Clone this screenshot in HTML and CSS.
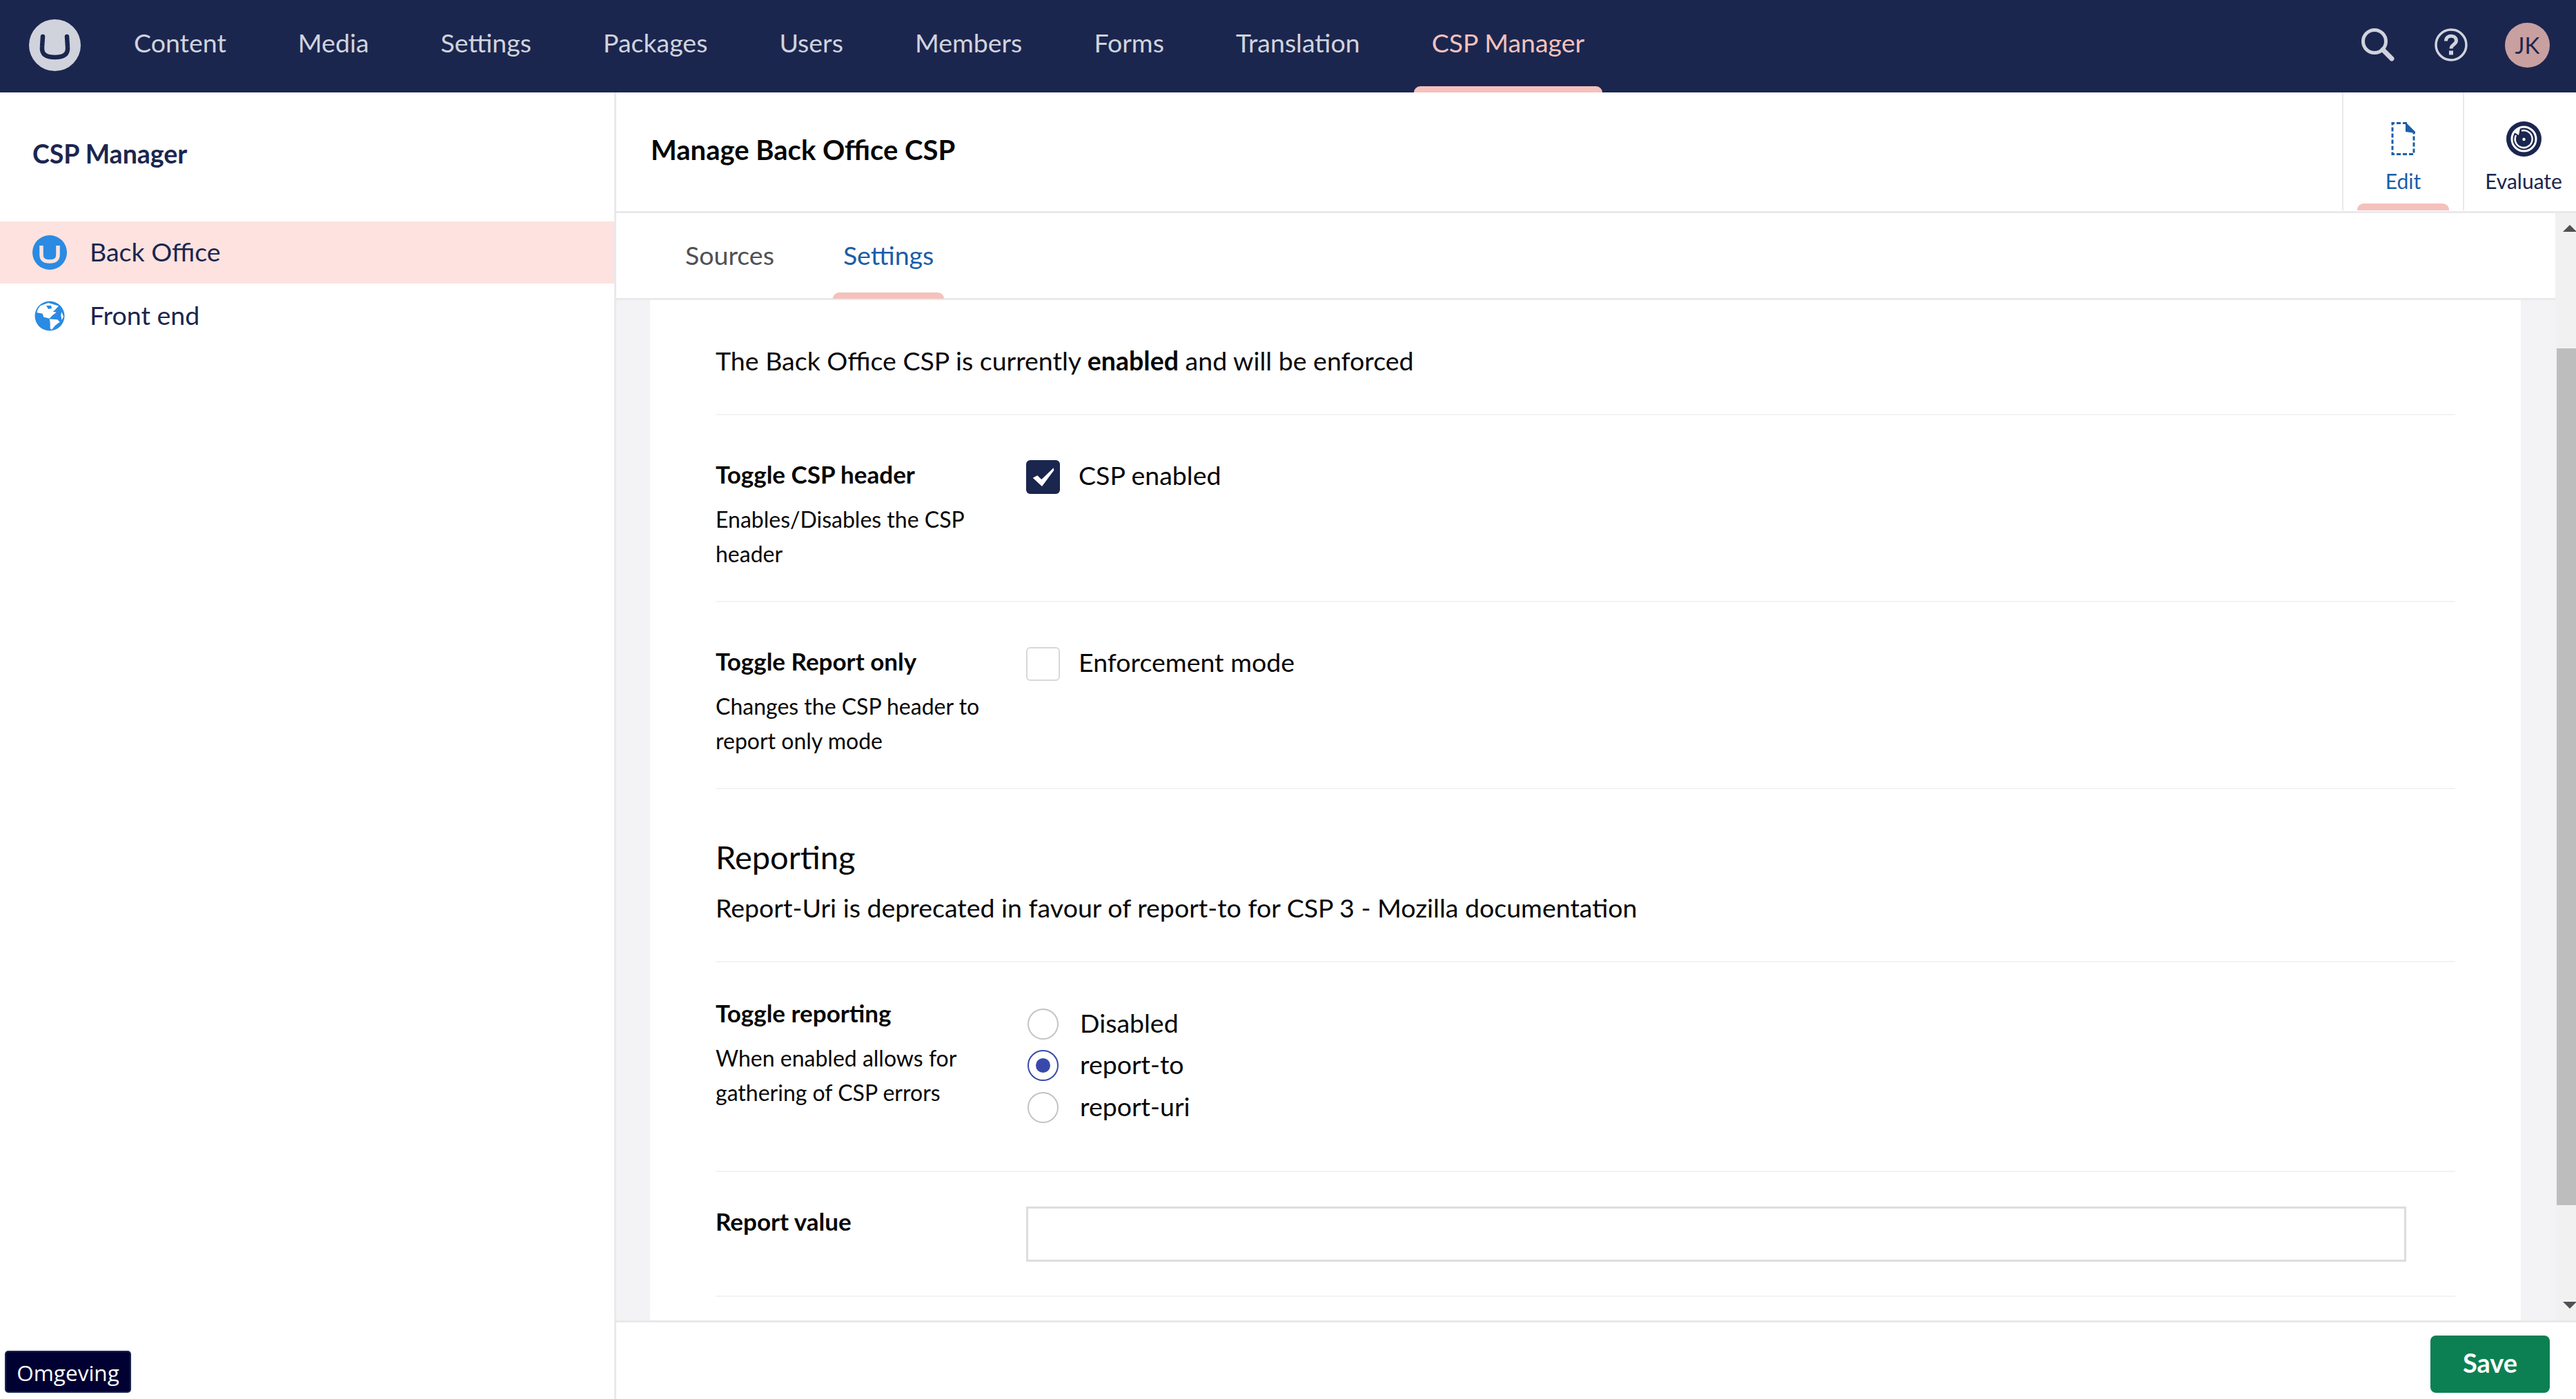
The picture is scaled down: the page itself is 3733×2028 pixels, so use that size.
FILE: index.html
```html
<!DOCTYPE html>
<html lang="en">
<head>
  <meta charset="UTF-8">
  <title>CSP Manager</title>
  <link rel="stylesheet" href="styles.css">
</head>
<body>
  <header class="topbar">
    <svg class="logo" viewBox="0 0 75 75"><circle cx="37.5" cy="37.5" r="37.5" fill="#d0d3dc"/><path d="M20 25 L19 40 C18 51 25 55 37.5 55 C50 55 57 51 56 40 L55 25" fill="none" stroke="#1b264f" stroke-width="6.5" stroke-linecap="round"/></svg>
    <nav class="sections">
      <a class="section">Content</a>
      <a class="section">Media</a>
      <a class="section">Settings</a>
      <a class="section">Packages</a>
      <a class="section">Users</a>
      <a class="section">Members</a>
      <a class="section">Forms</a>
      <a class="section">Translation</a>
      <a class="section active">CSP Manager</a>
    </nav>
    <div class="tools">
      <svg class="tool" viewBox="0 0 48 48"><circle cx="19" cy="19" r="16.5" fill="none" stroke="#d0d3dc" stroke-width="5"/><path d="M31 31 L44 44" stroke="#d0d3dc" stroke-width="7" stroke-linecap="round"/></svg>
      <svg class="tool help" viewBox="0 0 48 48"><circle cx="24" cy="24" r="22" fill="none" stroke="#d0d3dc" stroke-width="3.5"/><path d="M16.5 18.5 C16.5 8.5 31.5 9 31.5 18 C31.5 23.5 24 23.5 24 29.5" fill="none" stroke="#d0d3dc" stroke-width="5"/><rect x="21" y="32.5" width="6" height="6" fill="#d0d3dc"/></svg>
      <div class="avatar">JK</div>
    </div>
  </header>

  <div class="app">
    <aside class="sidebar">
      <h3 class="sidebar-title">CSP Manager</h3>
      <ul class="tree">
        <li class="tree-item active">
          <span class="tree-icon">
            <svg viewBox="0 0 50 50"><circle cx="25" cy="25" r="25" fill="#2b8ae2"/><path d="M13 15 L13 28 C13 36 18 38 25 38 C32 38 37 36 37 28 L37 15" fill="none" stroke="#fde2df" stroke-width="5.5"/></svg>
          </span>
          Back Office
        </li>
        <li class="tree-item">
          <span class="tree-icon">
            <svg viewBox="0 0 50 50"><circle cx="25" cy="25" r="21.5" fill="#2b8ae2"/><path d="M11.3 10.3 L23 6 L38 10.5 L33 16 L29.7 18.7 L34.7 19.7 L28 25 L24.7 28.7 L23 28.3 L16.3 26.7 L14.7 21.7 L6.3 20 L8 15 Z" fill="#fff"/><path d="M20 10 L27 10 L28 14 L23 15 Z" fill="#2b8ae2"/><path d="M24.7 29.5 L36.3 30.3 L39.7 33.7 L33 38.7 L28 45 L25.7 43.3 L25.7 35 Z" fill="#fff"/><path d="M42.3 19 L45 26 L42.5 31 L41.3 24 Z" fill="#fff"/></svg>
          </span>
          Front end
        </li>
      </ul>
    </aside>

    <main class="editor">
      <div class="editor-head">
        <h1 class="editor-title">Manage Back Office CSP</h1>
        <div class="apps">
          <div class="app-btn active">
            <svg class="app-icon doc" viewBox="0 0 35 48"><path d="M23 1.5 L2 1.5 L2 46.5 L33 46.5 L33 14" fill="none" stroke="#1b5ea8" stroke-width="3" stroke-dasharray="6 3"/><path d="M21 0 L35 14 L35 16 L21 14 Z" fill="#1b5ea8"/></svg>
            <span>Edit</span>
          </div>
          <div class="app-btn">
            <svg class="app-icon" viewBox="0 0 51 51"><circle cx="25.5" cy="25.5" r="25.5" fill="#1b264f"/><circle cx="25.5" cy="25.5" r="17.5" fill="none" stroke="#fff" stroke-width="3"/><path d="M14 20 A12.5 12.5 0 1 0 22 13.5" fill="none" stroke="#fff" stroke-width="2.5"/><path d="M10 15 L20 10 L18 20 Z" fill="#fff"/><circle cx="25.5" cy="26" r="2.2" fill="#fff"/></svg>
            <span>Evaluate</span>
          </div>
        </div>
      </div>

      <div class="editor-body">
        <div class="editor-main">
          <div class="tabs">
            <a class="tab">Sources</a>
            <a class="tab active">Settings</a>
          </div>
          <div class="canvas">
            <section class="panel">
              <p class="status">The Back Office CSP is currently <b>enabled</b> and will be enforced</p>

              <div class="prop">
                <div class="prop-label">
                  <label>Toggle CSP header</label>
                  <small>Enables/Disables the CSP header</small>
                </div>
                <div class="check-row">
                  <span class="check on">
                    <svg viewBox="0 0 49 49"><path d="M9.7 25.7 L16.3 22.3 L22.3 28 L39.7 11.3 L40.3 14.7 L23 38 Z" fill="#fff"/></svg>
                  </span>
                  CSP enabled
                </div>
              </div>

              <div class="prop">
                <div class="prop-label">
                  <label>Toggle Report only</label>
                  <small>Changes the CSP header to report only mode</small>
                </div>
                <div class="check-row">
                  <span class="check"></span>
                  Enforcement mode
                </div>
              </div>

              <div class="intro">
                <h2>Reporting</h2>
                <p>Report-Uri is deprecated in favour of report-to for CSP 3 - Mozilla documentation</p>
              </div>

              <div class="prop reporting">
                <div class="prop-label">
                  <label>Toggle reporting</label>
                  <small>When enabled allows for gathering of CSP errors</small>
                </div>
                <div class="radios">
                  <div class="radio-row"><span class="radio"></span>Disabled</div>
                  <div class="radio-row"><span class="radio on"></span>report-to</div>
                  <div class="radio-row"><span class="radio"></span>report-uri</div>
                </div>
              </div>

              <div class="prop value">
                <div class="prop-label">
                  <label>Report value</label>
                </div>
                <input class="text-input" type="text">
              </div>
            </section>
          </div>
        </div>
        <div class="scrollbar">
          <span class="arrow up"></span>
          <span class="thumb"></span>
          <span class="arrow down"></span>
        </div>
      </div>

      <footer class="editor-foot">
        <button class="save">Save</button>
      </footer>
    </main>
  </div>

  <div class="env-badge">Omgeving</div>
</body>
</html>
```

FILE: styles.css
```css
* {
  box-sizing: border-box;
}

html, body {
  height: 100%;
}

body {
  margin: 0;
  display: flex;
  flex-direction: column;
  overflow: hidden;
  font-family: Lato, "Open Sans", sans-serif;
  font-size: 36px;
  color: #060606;
  background-color: #fff;
}

/* top bar */
.topbar {
  height: 134px;
  flex: none;
  display: flex;
  align-items: center;
  padding: 0 38px 4px 42px;
  background-color: #1b264f;
}

.logo {
  width: 75px;
  height: 75px;
  flex: none;
}

.sections {
  display: flex;
  height: 134px;
  margin: 4px 0 0 25px;
  flex: 1;
}

.section {
  position: relative;
  display: flex;
  align-items: center;
  padding: 0 52px 11px;
  color: #d0d3dc;
  font-size: 37.5px;
}

.section.active {
  color: #f5c1bc;
}

.section.active::after {
  content: "";
  position: absolute;
  left: 26px;
  right: 26px;
  bottom: 0;
  height: 9px;
  border-radius: 9px 9px 0 0;
  background-color: #f5c1bc;
}

.tools {
  display: flex;
  align-items: center;
}

.tool {
  width: 48px;
  height: 48px;
}

.tool.help {
  margin-left: 58px;
}

.avatar {
  width: 65px;
  height: 65px;
  margin-left: 54px;
  display: flex;
  align-items: center;
  justify-content: center;
  border-radius: 50%;
  background-color: #c9a0a0;
  color: #1b264f;
  font-size: 33px;
}

/* layout */
.app {
  flex: 1;
  display: flex;
  min-height: 0;
}

.sidebar {
  width: 893px;
  flex: none;
  border-right: 3px solid #e9e9eb;
}

.sidebar-title {
  margin: 0;
  height: 187px;
  padding: 66px 0 0 47px;
  font-size: 37.5px;
  font-weight: 700;
  line-height: 46px;
  color: #1b264f;
}

.tree {
  margin: 0;
  padding: 0;
  list-style: none;
}

.tree-item {
  height: 90px;
  margin-bottom: 2px;
  display: flex;
  align-items: center;
  padding: 0 0 4px 47px;
  font-size: 37.5px;
  color: #1b264f;
}

.tree-item.active {
  background-color: #fde2df;
}

.tree-icon {
  width: 50px;
  height: 50px;
  margin: 4px 33px 0 0;
}

.tree-icon svg {
  display: block;
  width: 50px;
  height: 50px;
}

.editor {
  flex: 1;
  min-width: 0;
  display: flex;
  flex-direction: column;
}

.editor-head {
  height: 175px;
  flex: none;
  display: flex;
  align-items: stretch;
  justify-content: space-between;
  border-bottom: 3px solid #e9e9eb;
}

.editor-title {
  margin: 0;
  padding: 60px 0 0 50px;
  font-size: 40px;
  font-weight: 700;
  line-height: 46px;
}

.apps {
  display: flex;
  margin-bottom: 1px;
}

.app-btn {
  position: relative;
  width: 175px;
  display: flex;
  flex-direction: column;
  align-items: center;
  border-left: 2px solid #e9e9eb;
  padding-top: 42px;
  font-size: 30px;
  color: #1b264f;
}

.app-btn + .app-btn {
  width: 164px;
  padding-left: 10px;
}

.app-btn span {
  margin-top: 15px;
  line-height: 40px;
}

.app-btn.active {
  color: #1b5ea8;
}

.app-btn.active::after {
  content: "";
  position: absolute;
  left: 20px;
  right: 20px;
  bottom: 0;
  height: 10px;
  border-radius: 9px 9px 0 0;
  background-color: #f5c1bc;
}

.app-icon {
  width: 51px;
  height: 51px;
}

.app-icon.doc {
  width: 35px;
  height: 48px;
  margin-top: 1px;
  margin-bottom: 2px;
}

.editor-body {
  flex: 1;
  min-height: 0;
  display: flex;
}

.editor-main {
  flex: 1;
  min-width: 0;
  display: flex;
  flex-direction: column;
}

.tabs {
  height: 126px;
  flex: none;
  display: flex;
  padding-left: 50px;
  border-bottom: 3px solid #e9e9eb;
}

.tab {
  position: relative;
  display: flex;
  align-items: center;
  padding: 0 15px 2px;
  margin: 0 34px 0 0;
  font-size: 37.5px;
  color: #515054;
}

.tab:first-child {
  padding-left: 50px;
  margin-right: 70px;
}

.tab.active {
  color: #1b5ea8;
}

.tab.active::after {
  content: "";
  position: absolute;
  left: 0;
  right: 0;
  bottom: -1px;
  height: 9px;
  border-radius: 9px 9px 0 0;
  background-color: #f5c1bc;
}

.canvas {
  flex: 1;
  min-height: 0;
  overflow: hidden;
  padding: 0 50px 0 49px;
  background-color: #f3f3f5;
}

.panel {
  height: 100%;
  padding: 0 95px;
  background-color: #fff;
}

.status {
  height: 167px;
  margin: 0;
  padding-top: 65px;
  font-size: 37.5px;
  line-height: 46px;
  border-bottom: 2px solid #f3f3f5;
}

.prop {
  display: flex;
  height: 271px;
  padding-top: 64px;
  border-bottom: 2px solid #f3f3f5;
}

.prop-label {
  width: 450px;
  flex: none;
  margin-top: -2px;
}

.prop-label label {
  display: block;
  font-size: 35px;
  font-weight: 700;
  line-height: 46px;
}

.prop-label small {
  display: block;
  width: 420px;
  margin-top: 18px;
  font-size: 32px;
  line-height: 50px;
}

.check-row {
  display: flex;
  align-items: flex-start;
  font-size: 37.5px;
  line-height: 46px;
}

.check {
  width: 49px;
  height: 49px;
  margin: 1px 27px 0 0;
  border: 2px solid #d8d8da;
  border-radius: 6px;
}

.check.on {
  border: 0;
  background-color: #1b264f;
}

.check svg {
  display: block;
}

.intro {
  height: 251px;
  padding-top: 69px;
  border-bottom: 2px solid #f3f3f5;
}

.intro h2 {
  margin: 0;
  font-size: 47px;
  font-weight: 400;
  line-height: 58px;
}

.intro p {
  margin: 22px 0 0;
  font-size: 37.5px;
  line-height: 46px;
}

.prop.reporting {
  height: 304px;
  padding-top: 52px;
}

.radios {
  margin-top: 7px;
  margin-left: 2px;
}

.radio-row {
  height: 60.5px;
  display: flex;
  align-items: center;
  padding-bottom: 4px;
  font-size: 37.5px;
}

.radio {
  width: 45px;
  height: 45px;
  margin: 4px 31px 0 0;
  display: flex;
  align-items: center;
  justify-content: center;
  border: 2px solid #c4c4c6;
  border-radius: 50%;
}

.radio.on {
  border-color: #3949ab;
}

.radio.on::after {
  content: "";
  width: 21px;
  height: 21px;
  border-radius: 50%;
  background-color: #3949ab;
}

.prop.value {
  height: 181px;
  padding-top: 50px;
}

.text-input {
  width: 2000px;
  height: 80px;
  border: 3px solid #dddddf;
  background-color: #fff;
}

.scrollbar {
  position: relative;
  width: 30px;
  flex: none;
  background-color: #f1f1f1;
}

.thumb {
  position: absolute;
  top: 196px;
  bottom: 167px;
  left: 2px;
  right: 0;
  background-color: #bdbdbd;
}

.arrow {
  position: absolute;
  left: 11px;
  width: 0;
  height: 0;
  border-left: 10px solid transparent;
  border-right: 10px solid transparent;
}

.arrow.up {
  top: 17px;
  border-bottom: 10px solid #505055;
}

.arrow.down {
  bottom: 17px;
  border-top: 10px solid #505055;
}

.editor-foot {
  height: 114px;
  flex: none;
  display: flex;
  justify-content: flex-end;
  align-items: flex-start;
  padding: 19px 38px 0 0;
  border-top: 3px solid #e9e9eb;
}

.save {
  width: 173px;
  height: 83px;
  padding: 0 0 6px;
  border: none;
  border-radius: 8px;
  background-color: #0d8053;
  color: #fff;
  font-family: Lato, sans-serif;
  font-size: 38px;
  font-weight: 700;
}

.env-badge {
  position: absolute;
  left: 7px;
  bottom: 9px;
  width: 183px;
  height: 61px;
  display: flex;
  align-items: center;
  justify-content: center;
  padding-top: 2px;
  border: 2px solid #1b264f;
  border-radius: 5px;
  background-color: #000033;
  color: #fff;
  font-family: "Open Sans", sans-serif;
  font-size: 31.5px;
}
```
